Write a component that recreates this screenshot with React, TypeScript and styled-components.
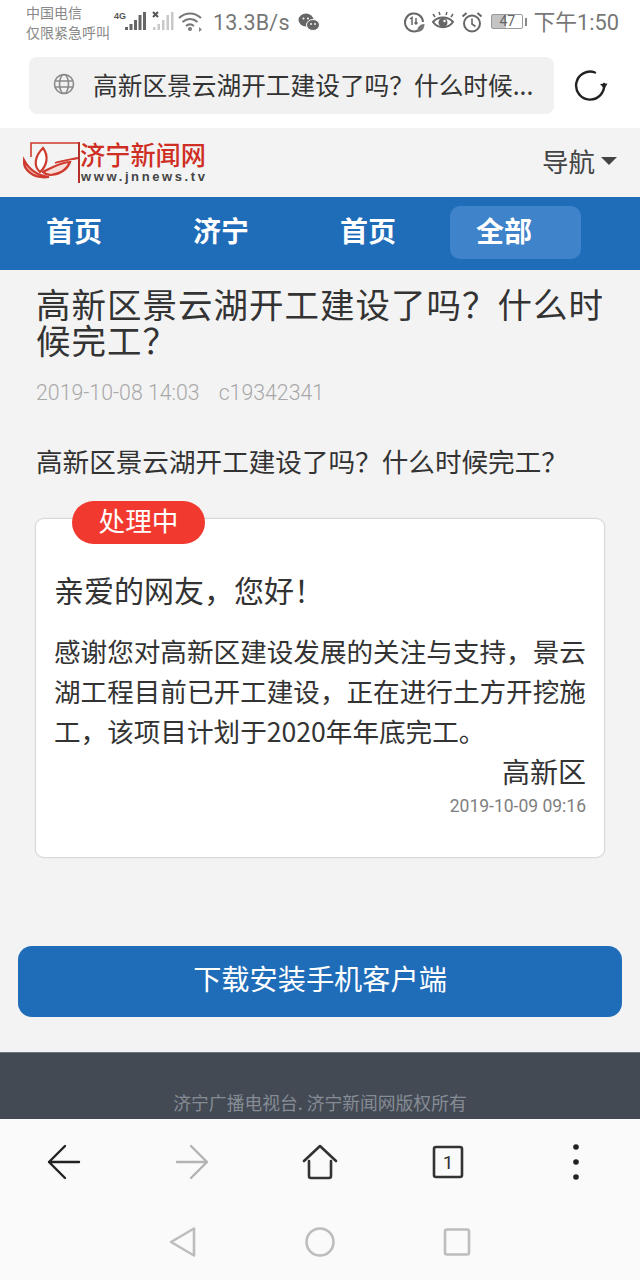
import React from "react";
import styled, { createGlobalStyle } from "styled-components";

const cjk = `"Noto Sans CJK SC", "Noto Sans", sans-serif`;

const GlobalStyle = createGlobalStyle`
  html, body {
    margin: 0;
    padding: 0;
    background: #f3f3f4;
    font-family: ${cjk};
  }
  * {
    box-sizing: border-box;
  }
`;

const Page = styled.div`
  width: 640px;
  height: 1280px;
  display: flex;
  flex-direction: column;
  overflow: hidden;
`;

const BrowserTop = styled.div`
  height: 128px;
  background: #ffffff;
  flex: none;
`;

const StatusBar = styled.div`
  height: 46px;
  padding: 0 21px 2px 26px;
  display: flex;
  align-items: center;
  color: #777777;
`;

const Carrier = styled.div`
  width: 88px;
  font-size: 14px;
  line-height: 20px;
  white-space: nowrap;
  color: #888888;
`;

const Speed = styled.span`
  margin-left: 9px;
  font-family: Roboto, sans-serif;
  font-size: 21.5px;
  letter-spacing: 0.2px;
`;

const StatusRight = styled.div`
  margin-left: auto;
  display: flex;
  align-items: center;
`;

const Clock = styled.span`
  margin-left: 10px;
  padding-bottom: 3px;
  font-size: 21.8px;
  white-space: nowrap;
  font-family: Roboto, ${cjk};
`;

const IconSlot = styled.svg<{ $gap?: number }>`
  display: block;
  flex: none;
  margin-left: ${({ $gap }) => $gap ?? 0}px;
`;

const Battery = styled.div`
  width: 32px;
  height: 15px;
  margin-left: 8px;
  margin-bottom: 2px;
  border: 1px solid #999999;
  border-radius: 2px;
  position: relative;
  display: flex;
  align-items: center;
  justify-content: center;
  font-family: Roboto, sans-serif;
  font-size: 14px;
  color: #666666;
  background: linear-gradient(to right, #c4c4c4 47%, #ffffff 47%);

  &::after {
    content: "";
    position: absolute;
    right: -5px;
    top: 3px;
    width: 2px;
    height: 8px;
    background: #888888;
  }
`;

const AddressRow = styled.div`
  height: 82px;
  padding: 11px 0 0 29px;
  display: flex;
  align-items: flex-start;
`;

const AddressBar = styled.div`
  width: 525px;
  height: 57px;
  border-radius: 8px;
  background: #f1f1f1;
  display: flex;
  align-items: center;
  padding: 0 0 3px 24px;
`;

const AddressText = styled.span`
  margin-left: 18px;
  font-size: 24.7px;
  color: #333333;
  white-space: nowrap;
`;

const ReloadSlot = styled.div`
  margin: 12px 0 0 20px;
`;

const LogoBar = styled.div`
  height: 69px;
  flex: none;
  padding: 6px 23px 0 23px;
  display: flex;
  justify-content: space-between;
  align-items: flex-start;
  background: #f3f3f4;
`;

const Guide = styled.div`
  display: flex;
  align-items: center;
  gap: 6px;
  margin-top: 9px;
  font-size: 26.5px;
  line-height: 36px;
  color: #444444;
`;

const Caret = styled.span`
  width: 0;
  height: 0;
  border-left: 8.5px solid transparent;
  border-right: 8.5px solid transparent;
  border-top: 8px solid #444444;
`;

const NavBar = styled.nav`
  height: 73px;
  flex: none;
  background: #1f6cb9;
  padding: 9px 0 0 20px;
  display: grid;
  grid-template-columns: 147px 147px 136px 131px;
  align-items: start;
`;

const NavItem = styled.div<{ $active?: boolean }>`
  height: 53px;
  width: 131px;
  border-radius: 10px;
  padding-left: 26px;
  font-size: 28px;
  line-height: 48px;
  font-weight: 700;
  color: #ffffff;
  background: ${({ $active }) => ($active ? "#3f83ca" : "transparent")};
`;

const Article = styled.main`
  flex: 1;
  background: #f3f3f4;
  padding: 15px 18px 0;
`;

const Title = styled.h1`
  margin: 0;
  padding: 0 10px 0 18px;
  font-size: 34.5px;
  letter-spacing: 1px;
  line-height: 36px;
  font-weight: 400;
  color: #333333;
`;

const Meta = styled.div`
  display: flex;
  gap: 19px;
  margin-top: 24px;
  padding: 0 18px;
  font-family: Roboto, sans-serif;
  font-size: 21.3px;
  font-weight: 300;
  line-height: 24px;
  color: #a8a8a8;
`;

const Question = styled.p`
  margin: 36px 0 0;
  padding: 0 18px;
  font-size: 26.6px;
  line-height: 40px;
  color: #333333;
  white-space: nowrap;
`;

const ReplyCard = styled.section`
  position: relative;
  margin: 37px 17px 0;
  height: 340px;
  background: #ffffff;
  border: 1px solid #d8d8d8;
  border-radius: 9px;
  padding: 47px 18px 0;
  box-shadow: 0 0 2px rgba(0, 0, 0, 0.08);
`;

const StatusBadge = styled.div`
  position: absolute;
  top: -18px;
  left: 36px;
  width: 133px;
  height: 43px;
  border-radius: 22px;
  background: #f2392f;
  color: #ffffff;
  font-size: 26.6px;
  line-height: 38px;
  text-align: center;
`;

const Greeting = styled.div`
  font-size: 30px;
  line-height: 46px;
  color: #333333;
`;

const ReplyBody = styled.p`
  margin: 19px 0 0;
  font-size: 26.6px;
  line-height: 40px;
  color: #333333;
`;

const Signature = styled.div`
  text-align: right;
  font-size: 28px;
  line-height: 40px;
  color: #333333;
`;

const ReplyDate = styled.div`
  margin-top: 2px;
  text-align: right;
  font-family: Roboto, sans-serif;
  font-size: 17.5px;
  line-height: 26px;
  color: #808080;
`;

const DownloadButton = styled.div`
  margin-top: 88px;
  height: 71px;
  border-radius: 14px;
  background: #1f6cb9;
  color: #ffffff;
  font-size: 28.2px;
  line-height: 64px;
  text-align: center;
`;

const Footer = styled.footer`
  height: 67px;
  flex: none;
  background: #434a54;
  border-top: 1px solid #6d737b;
  color: #868c94;
  font-size: 17.8px;
  line-height: 24px;
  text-align: center;
  padding-top: 37px;
  overflow: hidden;
`;

const Toolbar = styled.div`
  height: 91px;
  flex: none;
  background: #fafafa;
  display: grid;
  grid-template-columns: repeat(5, 1fr);
  align-items: start;
`;

const ToolSlot = styled.div`
  display: flex;
  justify-content: center;
  padding-top: 25px;
`;

const SystemBar = styled.div`
  height: 70px;
  flex: none;
  background: #fafafa;
  display: flex;
  justify-content: center;
  align-items: flex-start;
  gap: 107px;
  padding-top: 14px;
`;

function App() {
  return (
    <>
      <GlobalStyle />
      <Page>
        <BrowserTop>
          <StatusBar>
            <Carrier>
              中国电信
              <br />
              仅限紧急呼叫
            </Carrier>
            <IconSlot width="34" height="24" viewBox="0 0 34 24">
              <text x="0" y="9" fontFamily="Liberation Sans" fontWeight="700" fontSize="9" fill="#555">4G</text>
              <g fill="#666">
                <rect x="11" y="17" width="3" height="3" />
                <rect x="15.500" y="14" width="3" height="6" />
                <rect x="20" y="10" width="3" height="10" />
                <rect x="24.500" y="5" width="3" height="15" />
                <rect x="29" y="2" width="3" height="18" />
              </g>
            </IconSlot>
            <IconSlot $gap={4} width="24" height="24" viewBox="0 0 24 24">
              <path d="M1 2l5 5M6 2L1 7" stroke="#555" strokeWidth="2" />
              <g fill="#c8c8c8">
                <rect x="1" y="17" width="2.500" height="3" />
                <rect x="5.500" y="14" width="2.500" height="6" />
                <rect x="10" y="10" width="2.500" height="10" />
                <rect x="14.500" y="5" width="2.500" height="15" />
                <rect x="19" y="2" width="2.500" height="18" />
              </g>
            </IconSlot>
            <IconSlot $gap={2} width="26" height="24" viewBox="0 0 26 24">
              <g fill="none" stroke="#777" strokeWidth="2">
                <path d="M1 8c6.500-6 15.500-6 22 0" />
                <path d="M4.500 12c4.500-4 10.500-4 15 0" />
                <path d="M8 16c2.500-2 5.500-2 8 0" />
              </g>
              <circle cx="12" cy="19" r="2" fill="#777" />
              <path d="M21 17l3 2.500-3 2.500z" fill="#888" />
            </IconSlot>
            <Speed>13.3B/s</Speed>
            <IconSlot $gap={8} width="22" height="20" viewBox="0 0 22 20">
              <ellipse cx="8" cy="8" rx="7.500" ry="6.500" fill="#666" />
              <ellipse cx="15" cy="13" rx="6.500" ry="5.500" fill="#666" stroke="#fff" strokeWidth="1" />
              <circle cx="5.500" cy="6.500" r="1" fill="#fff" />
              <circle cx="10" cy="6.500" r="1" fill="#fff" />
              <circle cx="13" cy="12" r="0.900" fill="#fff" />
              <circle cx="17" cy="12" r="0.900" fill="#fff" />
            </IconSlot>
            <StatusRight>
              <IconSlot width="22" height="22" viewBox="0 0 22 22">
                <path d="M15 19.500A9 9 0 1 1 20 11" fill="none" stroke="#666" strokeWidth="2" />
                <path d="M7 8l2-1.500V14M13 7v6M11.500 11.500l1.500 1.500 1.500-1.500" fill="none" stroke="#666" strokeWidth="1.500" />
                <path d="M14 21c0-5 3-8 7.500-8 0 5-3 8-7.500 8z" fill="#777" />
              </IconSlot>
              <IconSlot $gap={6} width="24" height="22" viewBox="0 0 24 22">
                <path d="M2 11c5-6 15-6 20 0-5 7-15 7-20 0z" fill="none" stroke="#666" strokeWidth="2" />
                <circle cx="12" cy="11.500" r="4.500" fill="#666" />
                <circle cx="13.500" cy="10" r="1.200" fill="#fff" />
                <path d="M4 6L2 3M9 4L8 1M15 4l1-3M20 6l2-3" stroke="#666" strokeWidth="1.500" />
              </IconSlot>
              <IconSlot $gap={6} width="22" height="22" viewBox="0 0 22 22">
                <circle cx="11" cy="12.500" r="8" fill="none" stroke="#666" strokeWidth="2" />
                <path d="M11 7.500v5.500l3.500 2.500" fill="none" stroke="#666" strokeWidth="1.600" />
                <path d="M1.500 5.500l4-3.500M20.500 5.500l-4-3.500" stroke="#666" strokeWidth="2" />
              </IconSlot>
              <Battery>47</Battery>
              <Clock>下午1:50</Clock>
            </StatusRight>
          </StatusBar>
          <AddressRow>
            <AddressBar>
              <IconSlot width="22" height="22" viewBox="0 0 22 22">
                <g fill="none" stroke="#8a8a8a" strokeWidth="1.600">
                  <circle cx="11" cy="11" r="9.500" />
                  <ellipse cx="11" cy="11" rx="4.500" ry="9.500" />
                  <path d="M2 8h18M2 14h18" />
                </g>
              </IconSlot>
              <AddressText>高新区景云湖开工建设了吗？什么时候...</AddressText>
            </AddressBar>
            <ReloadSlot>
              <IconSlot width="34" height="34" viewBox="0 0 34 34">
                <path d="M30 15A14 14 0 1 1 21 3.500" fill="none" stroke="#222" strokeWidth="2.400" strokeLinecap="round" />
                <path d="M26 15l4.500 5 3-5.500z" fill="#222" />
              </IconSlot>
            </ReloadSlot>
          </AddressRow>
        </BrowserTop>

        <LogoBar>
          {/* logo is a picture in the reference, so its words sit in the svg */}
          <IconSlot width="192" height="52" viewBox="0 -6 192 52">
            <g fill="none" stroke="#cf3a2e" strokeWidth="2.200">
              <path d="M8 17V3h47" strokeWidth="1.600" />
              <path d="M56 2v41" stroke="#b5302a" strokeWidth="2" />
              <path d="M1 20c-1 9 8 19 25 17-10-1-20-7-25-17z" fill="#eeb0a9" />
              <path d="M20 8c-8 8-10 18-3 24 7-6 9-16 3-24z" fill="#fff" />
              <path d="M20 32c8-4 18-10 27-10-3 8-11 12-19 13-3 0-6-1-8-3z" fill="#f8dcd8" />
              <path d="M32 23c6-2 13-3 23-5" strokeWidth="1.800" />
            </g>
            <text x="57" y="25" fontSize="26" fontWeight="500" fill="#cf2e23" textLength="126" lengthAdjust="spacingAndGlyphs">济宁新闻网</text>
            <text x="58" y="41" fontFamily="Liberation Sans" fontSize="13" fontWeight="700" fill="#444" textLength="124" lengthAdjust="spacing">www.jnnews.tv</text>
          </IconSlot>
          <Guide>
            导航
            <Caret />
          </Guide>
        </LogoBar>

        <NavBar>
          <NavItem>首页</NavItem>
          <NavItem>济宁</NavItem>
          <NavItem>首页</NavItem>
          <NavItem $active>全部</NavItem>
        </NavBar>

        <Article>
          <Title>高新区景云湖开工建设了吗？什么时候完工？</Title>
          <Meta>
            <span>2019-10-08 14:03</span>
            <span>c19342341</span>
          </Meta>
          <Question>高新区景云湖开工建设了吗？什么时候完工？</Question>
          <ReplyCard>
            <StatusBadge>处理中</StatusBadge>
            <Greeting>亲爱的网友，您好！</Greeting>
            <ReplyBody>
              感谢您对高新区建设发展的关注与支持，景云湖工程目前已开工建设，正在进行土方开挖施工，该项目计划于2020年年底完工。
            </ReplyBody>
            <Signature>高新区</Signature>
            <ReplyDate>2019-10-09 09:16</ReplyDate>
          </ReplyCard>
          <DownloadButton>下载安装手机客户端</DownloadButton>
        </Article>

        <Footer>济宁广播电视台. 济宁新闻网版权所有</Footer>

        <Toolbar>
          <ToolSlot>
            <IconSlot width="34" height="36" viewBox="0 0 34 36">
              <path d="M32 18H2M18 2L2 18l16 16" fill="none" stroke="#222" strokeWidth="2.400" strokeLinecap="round" strokeLinejoin="round" />
            </IconSlot>
          </ToolSlot>
          <ToolSlot>
            <IconSlot width="34" height="36" viewBox="0 0 34 36">
              <path d="M2 18h30M16 2l16 16-16 16" fill="none" stroke="#b4b4b4" strokeWidth="2.400" strokeLinecap="round" strokeLinejoin="round" />
            </IconSlot>
          </ToolSlot>
          <ToolSlot>
            <IconSlot width="36" height="36" viewBox="0 0 36 36">
              <path d="M2 17L18 2l16 15M7 17v15a2 2 0 0 0 2 2h18a2 2 0 0 0 2-2V17" fill="none" stroke="#333" strokeWidth="2.600" strokeLinecap="round" strokeLinejoin="round" />
            </IconSlot>
          </ToolSlot>
          <ToolSlot>
            <IconSlot width="32" height="36" viewBox="0 0 32 36">
              <rect x="2" y="3" width="28" height="30" rx="2" fill="none" stroke="#333" strokeWidth="2.600" />
              <text x="16" y="25" textAnchor="middle" fontFamily="Roboto" fontSize="19" fill="#333">1</text>
            </IconSlot>
          </ToolSlot>
          <ToolSlot>
            <IconSlot width="10" height="36" viewBox="0 0 10 36">
              <circle cx="5" cy="3" r="2.800" fill="#222" />
              <circle cx="5" cy="18" r="2.800" fill="#222" />
              <circle cx="5" cy="33" r="2.800" fill="#222" />
            </IconSlot>
          </ToolSlot>
        </Toolbar>

        <SystemBar>
          <IconSlot width="30" height="36" viewBox="0 0 30 36">
            <path d="M26 4.500L3 18l23 13.500z" fill="none" stroke="#bdbdbd" strokeWidth="2.600" strokeLinejoin="round" />
          </IconSlot>
          <IconSlot width="30" height="36" viewBox="0 0 30 36">
            <circle cx="15" cy="18" r="13.500" fill="none" stroke="#bdbdbd" strokeWidth="2.600" />
          </IconSlot>
          <IconSlot width="30" height="36" viewBox="0 0 30 36">
            <rect x="3" y="5.500" width="24" height="25" rx="2" fill="none" stroke="#bdbdbd" strokeWidth="2.600" />
          </IconSlot>
        </SystemBar>
      </Page>
    </>
  );
}

export default App;
